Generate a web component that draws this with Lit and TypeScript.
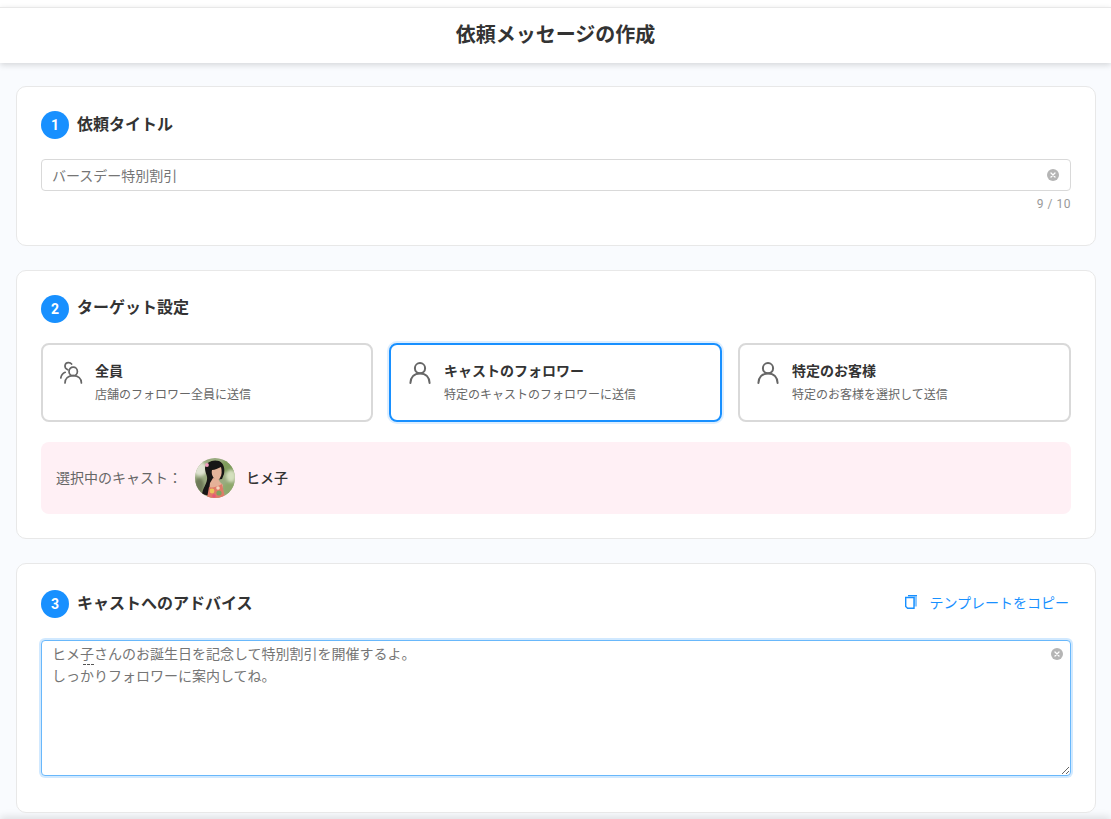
import { LitElement, html, css, svg } from 'lit';
import { customElement } from 'lit/decorators.js';

const userIcon = html`<svg class="opt-icon" viewBox="0 0 24 24" fill="none" stroke="#666" stroke-width="2" stroke-linecap="round">
  <circle cx="12" cy="7.2" r="5.1"></circle>
  <path d="M2.400 22c0-5.600 3.600-9.600 9.600-9.600s9.600 4 9.600 9.600"></path>
</svg>`;

const groupIcon = html`<svg class="opt-icon" viewBox="0 0 24 24" fill="none" stroke="#666" stroke-width="1.700" stroke-linecap="round">
  <circle cx="14.200" cy="10.400" r="4.200"></circle>
  <path d="M6 22c0-4.400 3.200-7.400 8.200-7.400s8.200 3 8.200 7.400"></path>
  <path d="M8.800 8.800C6.800 8 5.800 6.400 6 4.700 6.200 2.800 7.800 1.500 9.600 1.600c1.300.1 2.300.6 3 1.500"></path>
  <path d="M1.800 17c.4-2.600 2-4.700 4.400-5.700"></path>
</svg>`;

const clearIcon = html`<svg class="clear" viewBox="0 0 12 12">
  <circle cx="6" cy="6" r="6" fill="#b5b5b5"></circle>
  <path d="M4 4l4 4M8 4l-4 4" stroke="#fff" stroke-width="1.300" stroke-linecap="round"></path>
</svg>`;

const copyIcon = html`<svg class="copy-icon" viewBox="0 0 12 14" fill="none">
  <path d="M9 1.500h3v10H9z" fill="#8cc8ff"></path>
  <path d="M3 .7h9" stroke="#1890ff" stroke-width="1.400"></path>
  <path d="M.7 2.500h8.300v10.800H2.600L.7 11.400z" fill="#fff" stroke="#1890ff" stroke-width="1.400"></path>
</svg>`;

const avatarArt = svg`
  <defs>
    <filter id="soft"><feGaussianBlur stdDeviation="1.800"></feGaussianBlur></filter>
    <filter id="softer"><feGaussianBlur stdDeviation="0.450"></feGaussianBlur></filter>
  </defs>
  <rect width="40" height="40" fill="#9aab80"></rect>
  <g filter="url(#soft)">
    <ellipse cx="5" cy="11" rx="7" ry="7" fill="#dfe3d2"></ellipse>
    <ellipse cx="34" cy="8" rx="8" ry="7" fill="#7f9c5c"></ellipse>
    <ellipse cx="36" cy="18" rx="5" ry="6" fill="#d4e0bd"></ellipse>
    <ellipse cx="35" cy="31" rx="7" ry="7" fill="#8ea86c"></ellipse>
    <ellipse cx="4" cy="28" rx="5" ry="8" fill="#6e7a58"></ellipse>
  </g>
  <g filter="url(#softer)">
    <path d="M10 10C11 4 18 1 24 3c5 2 6 8 5 13l-2 5-8 1-3 6-1 10-8-2c1-6 4-9 5-14 1-4-2-7-2-12z" fill="#191412"></path>
    <path d="M17 12c3 0 6-2 9-3 1 4 1 8-1 11-1 2-3 3-4 2-3-2-5-6-4-10z" fill="#e3b49a"></path>
    <path d="M18 20l5 1 2 3 3 3-1 6H14l1-8z" fill="#e5b198"></path>
    <path d="M14 29c3 1 8 0 13-3l3 14H12z" fill="#e07a68"></path>
    <circle cx="17" cy="33" r="2.400" fill="#ecc65a"></circle>
    <circle cx="24" cy="35" r="2.600" fill="#7fa25f"></circle>
    <circle cx="23" cy="30" r="1.800" fill="#f2d6bc"></circle>
    <circle cx="19" cy="38" r="1.800" fill="#e7557a"></circle>
    <circle cx="12" cy="7" r="1.900" fill="#ee9cbc"></circle>
  </g>
`;

@customElement('app-root')
export class AppRoot extends LitElement {
  static styles = css`
    :host {
      display: block;
      height: 100vh;
      overflow: hidden;
      background: #f9fbfe;
      color: #333;
      font-family: Roboto, "Noto Sans CJK JP", sans-serif;
    }

    * {
      box-sizing: border-box;
    }

    .top-gap {
      height: 7px;
      background: #fff;
    }

    .header {
      height: 56px;
      display: flex;
      align-items: center;
      justify-content: center;
      padding-bottom: 4px;
      background: #fff;
      border-top: 1px solid #e8e8e8;
      box-shadow: 0 2px 6px rgba(0, 0, 0, 0.15);
      font-size: 20px;
      font-weight: 700;
      position: relative;
    }

    .content {
      display: flex;
      flex-direction: column;
      gap: 24px;
      padding: 23px 15px 6px 16px;
    }

    .card {
      background: #fff;
      border: 1px solid #e8e8e8;
      border-radius: 10px;
      padding: 24px;
    }

    .card.one {
      height: 160px;
    }

    .card.two {
      height: 269px;
    }

    .card.three {
      height: 250px;
      padding-top: 26px;
    }

    .head {
      display: flex;
      align-items: center;
      gap: 8px;
      height: 28px;
    }

    .badge {
      width: 28px;
      height: 28px;
      border-radius: 50%;
      background: #1890ff;
      color: #fff;
      display: flex;
      align-items: center;
      justify-content: center;
      font-size: 14px;
      font-weight: 700;
    }

    .head h2 {
      margin: 0;
      font-size: 16px;
      font-weight: 700;
      line-height: 28px;
    }

    .card.two .head h2 {
      padding-bottom: 2px;
    }

    .copy {
      margin-left: auto;
      display: flex;
      align-items: center;
      gap: 12px;
      padding: 0 2px 4px 0;
      color: #1890ff;
      font-size: 14px;
    }

    .copy-icon {
      width: 12px;
      height: 14px;
    }

    .field {
      position: relative;
      margin-top: 20px;
    }

    input,
    textarea {
      display: block;
      width: 100%;
      border: 1px solid #d9d9d9;
      border-radius: 4px;
      background: #fff;
      color: #757575;
      font: inherit;
      font-size: 14px;
      outline: none;
    }

    input {
      height: 32px;
      padding: 0 30px 0 10px;
    }

    textarea {
      height: 136px;
      padding: 2px 30px 4px 10px;
      line-height: 22px;
      border-color: #69b8fb;
      box-shadow: 0 0 0 2px rgba(24, 144, 255, 0.2);
      resize: vertical;
      margin-top: 22px;
    }

    .clear {
      position: absolute;
      right: 12px;
      top: 10px;
      width: 12px;
      height: 12px;
    }

    .field.area .clear {
      top: 8px;
      right: 8px;
    }

    .ime-mark {
      position: absolute;
      left: 42px;
      top: 24px;
      width: 11px;
      border-top: 1px dashed #555;
    }

    .count {
      margin-top: 5px;
      text-align: right;
      font-size: 12px;
      line-height: 16px;
      letter-spacing: 0.5px;
      color: #999;
    }

    .options {
      display: grid;
      grid-template-columns: 332px 333px 333px;
      gap: 16px;
      margin-top: 20px;
    }

    .option {
      height: 79px;
      display: flex;
      align-items: flex-start;
      gap: 12px;
      padding: 15px 16px 0;
      border: 2px solid #d9d9d9;
      border-radius: 8px;
    }

    .option.active {
      padding-left: 17px;
      border-color: #1890ff;
      box-shadow: 0 0 0 2px rgba(24, 144, 255, 0.15);
    }

    .opt-icon {
      width: 24px;
      height: 24px;
      margin-top: 1px;
      flex: none;
    }

    .opt-title {
      font-size: 14px;
      font-weight: 700;
      line-height: 22px;
    }

    .opt-desc {
      margin-top: 4px;
      font-size: 12px;
      line-height: 18px;
      color: #666;
    }

    .selected {
      height: 72px;
      margin-top: 20px;
      display: flex;
      align-items: center;
      padding: 0 15px;
      border-radius: 8px;
      background: #fff0f5;
      font-size: 14px;
    }

    .selected .label {
      color: #666;
      width: 139px;
      padding-bottom: 2px;
    }

    .avatar {
      width: 40px;
      height: 40px;
      border-radius: 50%;
      flex: none;
      display: block;
    }

    .selected .name {
      margin-left: 11px;
      padding-bottom: 2px;
      font-weight: 500;
    }

    .footer {
      height: 40px;
      background: #fff;
      box-shadow: 0 -2px 8px rgba(0, 0, 0, 0.12);
    }
  `;

  render() {
    return html`
      <div class="top-gap"></div>
      <header class="header">依頼メッセージの作成</header>
      <main class="content">
        <section class="card one">
          <div class="head"><span class="badge">1</span><h2>依頼タイトル</h2></div>
          <div class="field">
            <input .value=${'バースデー特別割引'} />
            ${clearIcon}
          </div>
          <div class="count">9 / 10</div>
        </section>

        <section class="card two">
          <div class="head"><span class="badge">2</span><h2>ターゲット設定</h2></div>
          <div class="options">
            <div class="option">
              ${groupIcon}
              <div>
                <div class="opt-title">全員</div>
                <div class="opt-desc">店舗のフォロワー全員に送信</div>
              </div>
            </div>
            <div class="option active">
              ${userIcon}
              <div>
                <div class="opt-title">キャストのフォロワー</div>
                <div class="opt-desc">特定のキャストのフォロワーに送信</div>
              </div>
            </div>
            <div class="option">
              ${userIcon}
              <div>
                <div class="opt-title">特定のお客様</div>
                <div class="opt-desc">特定のお客様を選択して送信</div>
              </div>
            </div>
          </div>
          <div class="selected">
            <span class="label">選択中のキャスト：</span>
            <svg class="avatar" viewBox="0 0 40 40">${avatarArt}</svg>
            <span class="name">ヒメ子</span>
          </div>
        </section>

        <section class="card three">
          <div class="head">
            <span class="badge">3</span><h2>キャストへのアドバイス</h2>
            <span class="copy">${copyIcon}テンプレートをコピー</span>
          </div>
          <div class="field area">
            <textarea .value=${'ヒメ子さんのお誕生日を記念して特別割引を開催するよ。\nしっかりフォロワーに案内してね。'}></textarea>
            ${clearIcon}
            <span class="ime-mark"></span>
          </div>
        </section>
      </main>
      <footer class="footer"></footer>
    `;
  }
}
